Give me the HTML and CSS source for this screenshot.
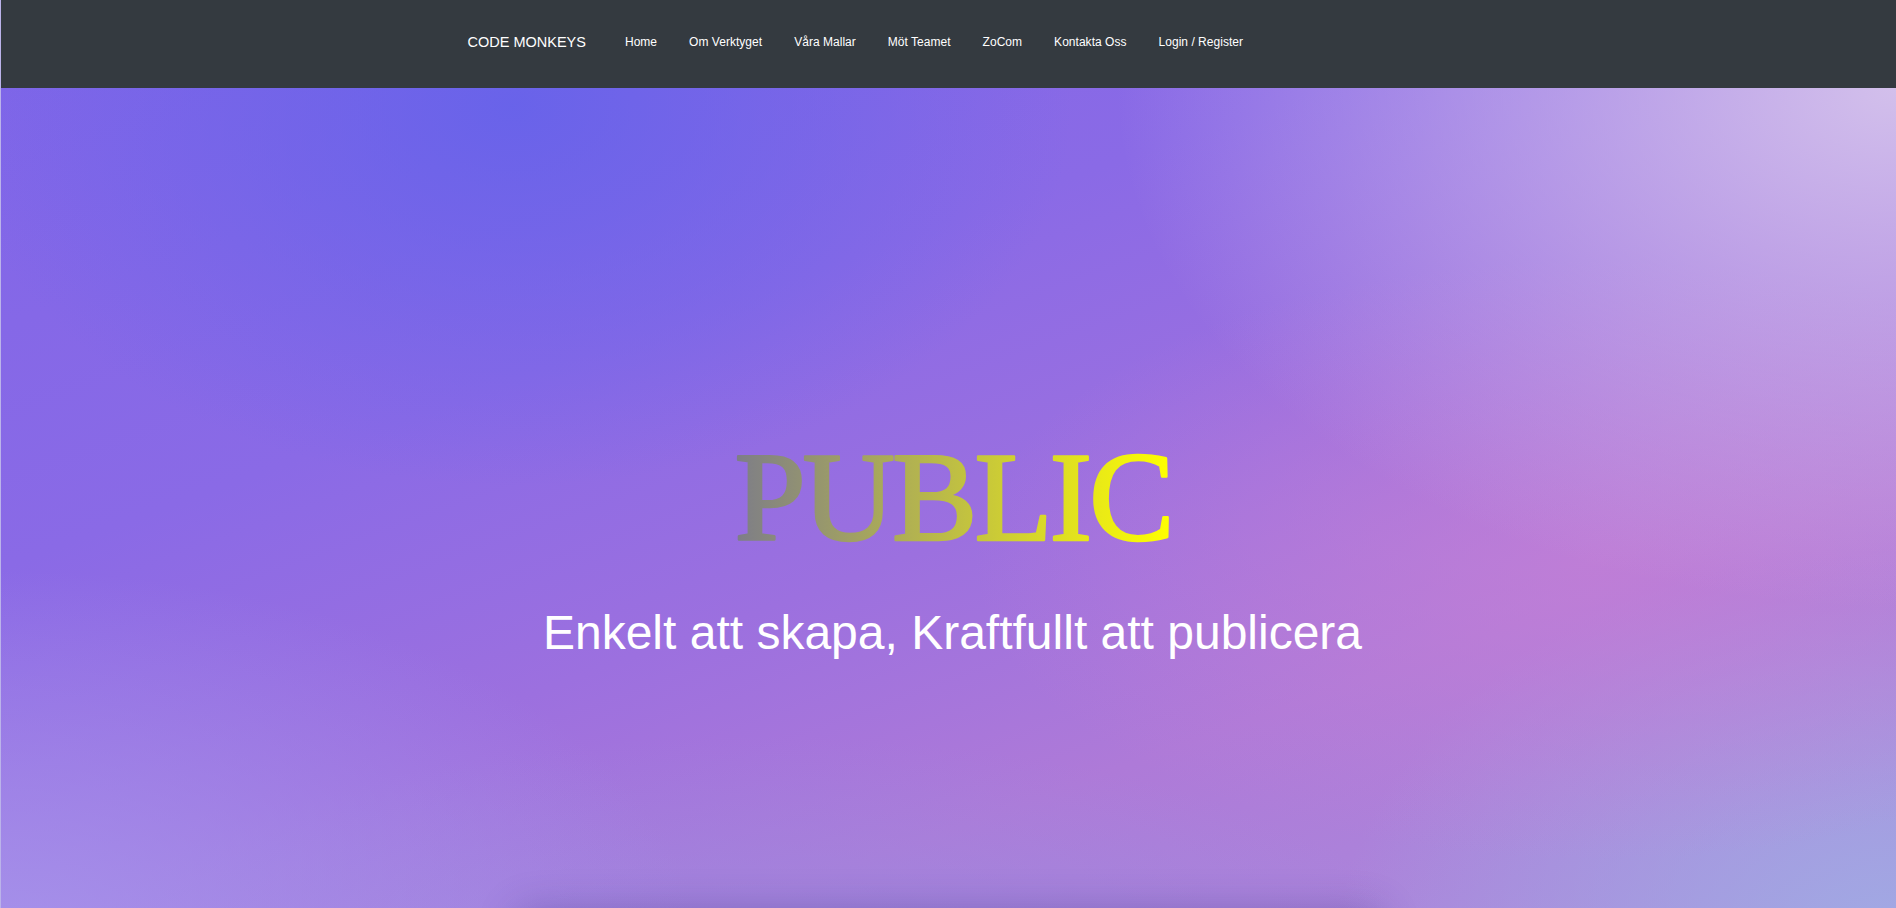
FILE: index.html
```html
<!DOCTYPE html>
<html lang="sv">
<head>
<meta charset="utf-8">
<title>PUBLIC – Code Monkeys</title>
<link rel="stylesheet" href="styles.css">
</head>
<body>
<div class="page">
  <header class="navbar">
    <nav class="nav-inner">
      <a class="brand" href="#">CODE MONKEYS</a>
      <ul class="nav-links">
        <li><a href="#">Home</a></li>
        <li><a href="#">Om Verktyget</a></li>
        <li><a href="#">Våra Mallar</a></li>
        <li><a href="#">Möt Teamet</a></li>
        <li><a href="#">ZoCom</a></li>
        <li><a href="#">Kontakta Oss</a></li>
        <li><a href="#">Login / Register</a></li>
      </ul>
    </nav>
  </header>
  <main>
    <section class="hero">
      <h1 class="hero-title">
        <svg class="title-svg" width="460" height="128" viewBox="0 0 460 128">
          <defs>
            <linearGradient id="pubGrad" x1="0" y1="0" x2="1" y2="0">
              <stop offset="0" stop-color="#7d7d88"/>
              <stop offset="1" stop-color="#ffff00"/>
            </linearGradient>
          </defs>
          <text class="title-text" x="230" y="107" text-anchor="middle">PUBLIC</text>
        </svg>
      </h1>
      <p class="hero-sub">Enkelt att skapa, Kraftfullt att publicera</p>
    </section>
    <section class="next">
      <div class="next-card"></div>
    </section>
  </main>
</div>
</body>
</html>
```

FILE: styles.css
```css
* { box-sizing: border-box; }

html, body {
  margin: 0;
  padding: 0;
}

body {
  font-family: "Liberation Sans", Arial, Helvetica, sans-serif;
  background: #a89ee4;
  overflow: hidden;
}

.page {
  border-left: 1px solid rgba(255, 255, 255, 0.22);
}

.navbar {
  background: #343a40;
  height: 88px;
  padding-bottom: 4px;
  display: flex;
  align-items: center;
}

.nav-inner {
  width: 962px;
  margin: 0 auto;
  display: flex;
  align-items: center;
}

.brand {
  color: #ffffff;
  text-decoration: none;
  font-size: 14.5px;
  margin-right: 23px;
  white-space: nowrap;
}

.nav-links {
  list-style: none;
  margin: 0;
  padding: 0;
  display: flex;
  align-items: center;
}

.nav-links a {
  display: block;
  padding: 0 16px;
  color: #ffffff;
  text-decoration: none;
  font-size: 12px;
  letter-spacing: 0.03px;
  white-space: nowrap;
}

.hero {
  height: 908px;
  display: flex;
  flex-direction: column;
  align-items: center;
  justify-content: center;
  padding-top: 6px;
  padding-left: 8px;
  background:
    radial-gradient(ellipse 560px 380px at 27% 2%, rgba(100, 98, 234, 0.85), rgba(100, 98, 234, 0) 100%),
    radial-gradient(ellipse 780px 520px at 100% 0%, rgba(214, 196, 236, 0.95), rgba(214, 196, 236, 0) 100%),
    radial-gradient(ellipse 620px 300px at 84% 52%, rgba(198, 128, 214, 0.7), rgba(198, 128, 214, 0) 100%),
    radial-gradient(ellipse 700px 380px at 0% 95%, rgba(166, 150, 236, 0.9), rgba(166, 150, 236, 0) 100%),
    radial-gradient(ellipse 700px 260px at 40% 100%, rgba(152, 140, 224, 0.8), rgba(152, 140, 224, 0) 100%),
    radial-gradient(ellipse 560px 400px at 100% 95%, rgba(160, 172, 228, 0.95), rgba(160, 172, 228, 0) 100%),
    linear-gradient(160deg, #8066e8 0%, #8a6ae6 30%, #9c70df 50%, #ae7ad8 68%, #a890de 100%);
}

.hero-title {
  margin: 0;
  line-height: 0;
}

.title-svg {
  display: block;
  overflow: visible;
}

.title-text {
  font-family: "Liberation Serif", "Times New Roman", serif;
  font-weight: normal;
  font-size: 128px;
  letter-spacing: -3px;
  fill: url(#pubGrad);
  stroke: url(#pubGrad);
  stroke-width: 2.6px;
  stroke-linejoin: round;
}

.hero-sub {
  margin: 48px 0 0;
  color: #ffffff;
  font-size: 48px;
  line-height: 1;
}

.next {
  display: flex;
  justify-content: center;
  margin-top: -80px;
  position: relative;
}

.next-card {
  width: 860px;
  height: 200px;
  background: #f4f2fb;
  border-radius: 6px;
  box-shadow: 0 -4px 40px rgba(50, 40, 120, 0.33);
}
```
